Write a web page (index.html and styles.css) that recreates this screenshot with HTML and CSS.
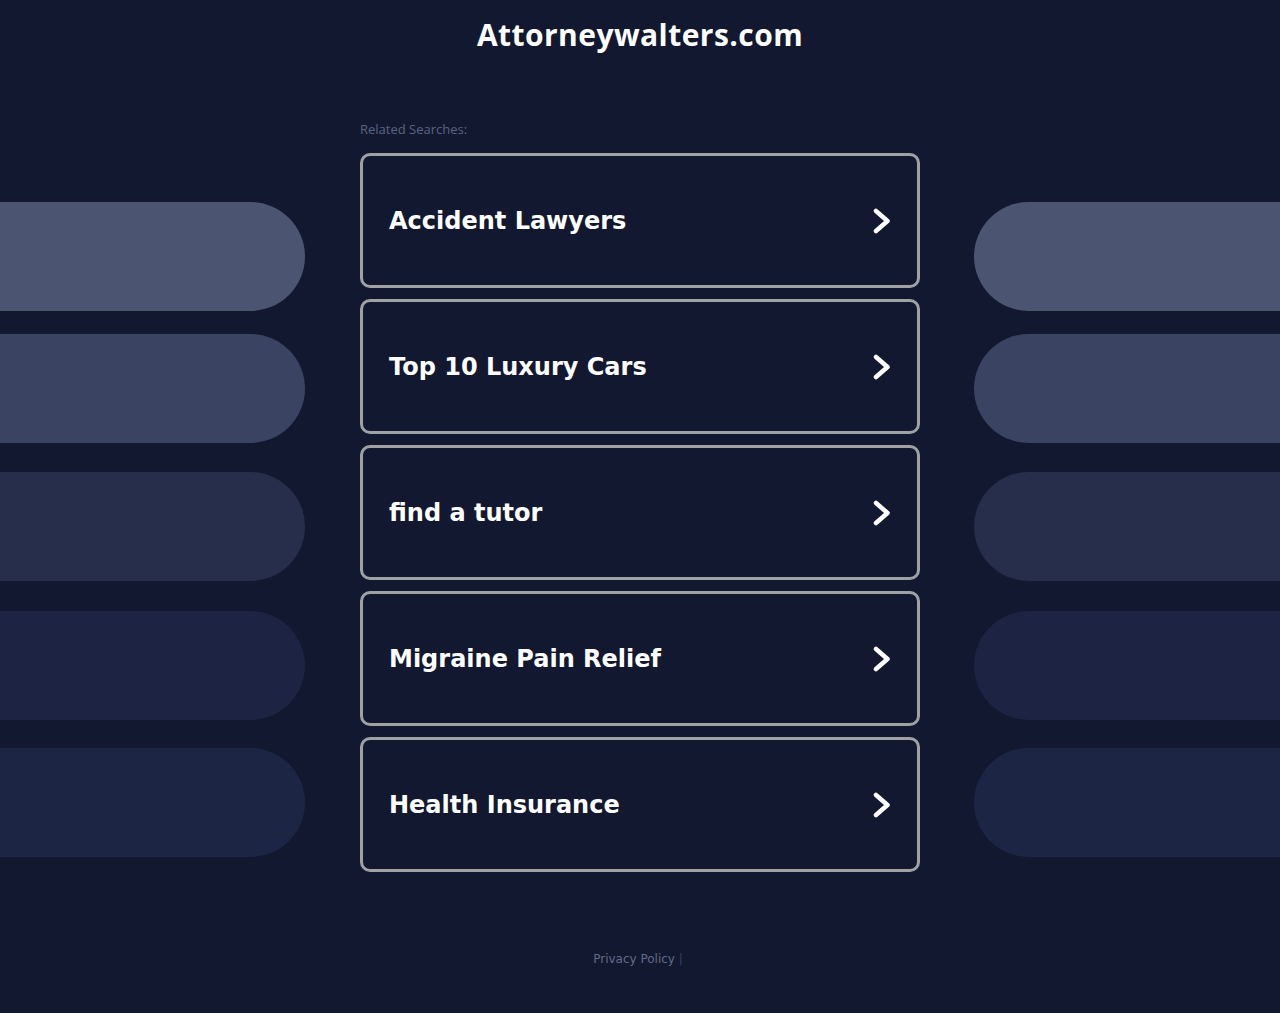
FILE: index.html
```html
<!DOCTYPE html>
<html>
<head>
<meta charset="utf-8">
<title>Attorneywalters.com</title>
<link rel="stylesheet" href="styles.css">
</head>
<body>
<header class="header">
  <h1 class="title">Attorneywalters.com</h1>
</header>
<main class="main">
  <div class="side side-left">
    <div class="pill pill-1"></div>
    <div class="pill pill-2"></div>
    <div class="pill pill-3"></div>
    <div class="pill pill-4"></div>
    <div class="pill pill-5"></div>
  </div>
  <div class="center">
    <p class="label">Related Searches:</p>
    <ul class="list">
      <li><a class="card" href="#"><span>Accident Lawyers</span><svg class="chev" viewBox="0 0 18 26" width="18" height="26"><polyline points="3,3 14.5,13 3,23"/></svg></a></li>
      <li><a class="card" href="#"><span>Top 10 Luxury Cars</span><svg class="chev" viewBox="0 0 18 26" width="18" height="26"><polyline points="3,3 14.5,13 3,23"/></svg></a></li>
      <li><a class="card" href="#"><span>find a tutor</span><svg class="chev" viewBox="0 0 18 26" width="18" height="26"><polyline points="3,3 14.5,13 3,23"/></svg></a></li>
      <li><a class="card" href="#"><span>Migraine Pain Relief</span><svg class="chev" viewBox="0 0 18 26" width="18" height="26"><polyline points="3,3 14.5,13 3,23"/></svg></a></li>
      <li><a class="card" href="#"><span>Health Insurance</span><svg class="chev" viewBox="0 0 18 26" width="18" height="26"><polyline points="3,3 14.5,13 3,23"/></svg></a></li>
    </ul>
  </div>
  <div class="side side-right">
    <div class="pill pill-1"></div>
    <div class="pill pill-2"></div>
    <div class="pill pill-3"></div>
    <div class="pill pill-4"></div>
    <div class="pill pill-5"></div>
  </div>
</main>
<footer class="footer">
  <a class="privacy" href="#">Privacy Policy</a> <span class="sep">|</span>
</footer>
</body>
</html>
```

FILE: styles.css
```css
html, body {
  margin: 0;
  padding: 0;
}
body {
  background: #111830;
  font-family: "DejaVu Sans", sans-serif;
  color: #fff;
  min-height: 1013px;
}
.header {
  display: flex;
  justify-content: center;
  padding-top: 15px;
  height: 95px;
  box-sizing: border-box;
}
.title {
  margin: 0;
  font-family: "Open Sans", "Lato", sans-serif;
  font-weight: 700;
  font-size: 30px;
  line-height: 40px;
  letter-spacing: 0.45px;
  color: #fff;
}
.main {
  display: grid;
  grid-template-columns: 1fr 560px 1fr;
}
.side {
  display: flex;
  flex-direction: column;
  padding-top: 107px;
}
.side-left {
  align-items: flex-start;
}
.side-right {
  align-items: flex-end;
}
.pill {
  height: 109px;
  width: 305px;
}
.side-left .pill {
  border-radius: 0 55px 55px 0;
}
.side-right .pill {
  width: 306px;
  border-radius: 55px 0 0 55px;
}
.pill-1 { background: #4b5571; }
.pill-2 { background: #3a4361; margin-top: 23px; }
.pill-3 { background: #262e4b; margin-top: 29px; }
.pill-4 { background: #1c2343; margin-top: 30px; }
.pill-5 { background: #1d2545; margin-top: 28px; }
.center {
  display: flex;
  flex-direction: column;
}
.label {
  margin: 26px 0 16px;
  font-family: "Open Sans", "Lato", sans-serif;
  font-size: 13px;
  line-height: 16px;
  color: #5b6381;
}
.list {
  list-style: none;
  margin: 0;
  padding: 0;
  display: flex;
  flex-direction: column;
  gap: 11px;
}
.card {
  display: flex;
  align-items: center;
  justify-content: space-between;
  height: 135px;
  box-sizing: border-box;
  border: 3px solid #a0a1a5;
  border-radius: 10px;
  padding: 0 26px 0 26px;
  background: #121830;
  color: #fff;
  text-decoration: none;
  font-weight: 700;
  font-size: 24px;
}
.chev {
  fill: none;
  stroke: #fff;
  stroke-width: 4.5;
  stroke-linecap: round;
  stroke-linejoin: round;
}
.footer {
  text-align: center;
  margin-top: 79px;
  padding-right: 4px;
  font-size: 12px;
  line-height: 16px;
  color: #3a4160;
}
.privacy {
  color: #646a85;
  text-decoration: none;
}
.sep {
  color: #3a4160;
}
```
